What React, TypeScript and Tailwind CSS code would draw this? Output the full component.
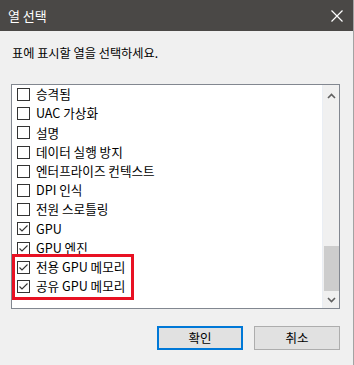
import React from "react"

interface Column {
  label: string
  checked: boolean
}

const columns: Column[] = [
  { label: "승격됨", checked: false },
  { label: "UAC 가상화", checked: false },
  { label: "설명", checked: false },
  { label: "데이터 실행 방지", checked: false },
  { label: "엔터프라이즈 컨텍스트", checked: false },
  { label: "DPI 인식", checked: false },
  { label: "전원 스로틀링", checked: false },
  { label: "GPU", checked: true },
  { label: "GPU 엔진", checked: true },
  { label: "전용 GPU 메모리", checked: true },
  { label: "공유 GPU 메모리", checked: true },
]

function CheckBox({ checked }: { checked: boolean }) {
  return (
    <span className="w-[13px] h-[13px] border border-[#333333] bg-white flex items-center justify-center shrink-0">
      {checked && (
        <svg width="11" height="11" viewBox="0 0 11 11">
          <path d="M1.5 5.5 L4 8 L9.5 2.5" fill="none" stroke="#333333" strokeWidth="1.1" />
        </svg>
      )}
    </span>
  )
}

export default function App() {
  return (
    <div className="w-[354px] h-[365px] bg-[#f0f0f0] border-r border-[#a3a3a3] font-['Noto_Sans_CJK_KR','Noto_Sans',sans-serif] text-[12px] text-black flex flex-col">
      {/* title bar */}
      <div className="h-[31px] bg-[#4a4846] flex items-center justify-between pl-[8px] pr-[10px] shrink-0">
        <span className="text-white text-[13px] leading-none">열 선택</span>
        <svg width="12" height="12" viewBox="0 0 12 12">
          <path d="M0.5 0.5 L11.5 11.5 M11.5 0.5 L0.5 11.5" stroke="#ffffff" strokeWidth="1.2" />
        </svg>
      </div>

      <p className="pl-[12px] pt-[14px] leading-[16px] text-[12.2px]">표에 표시할 열을 선택하세요.</p>

      {/* list box */}
      <div className="ml-[11px] mt-[23px] w-[329px] h-[225px] border border-[#828790] bg-white flex relative">
        <div className="flex-1 flex flex-col">
          {columns.map((col) => (
            <div key={col.label} className="h-[19.2px] flex items-center pl-[5px] gap-[5px]">
              <CheckBox checked={col.checked} />
              <span className="leading-none pl-[1px] text-[12.6px]">{col.label}</span>
            </div>
          ))}
        </div>

        {/* scrollbar */}
        <div className="w-[17px] bg-[#f0f0f0] border-l border-[#eaeef4] flex flex-col items-center">
          <div className="h-[17px] w-full flex items-center justify-center mt-[2px]">
            <svg width="9" height="6" viewBox="0 0 9 6">
              <path d="M1 5 L4.5 1.5 L8 5" fill="none" stroke="#606060" strokeWidth="1.6" />
            </svg>
          </div>
          <div className="flex-1" />
          <div className="w-[15px] h-[45px] bg-[#cdcdcd]" />
          <div className="h-[17px] w-full flex items-center justify-center">
            <svg width="9" height="6" viewBox="0 0 9 6">
              <path d="M1 1 L4.5 4.5 L8 1" fill="none" stroke="#606060" strokeWidth="1.6" />
            </svg>
          </div>
        </div>

        {/* highlight annotation */}
        <div className="absolute left-0 top-[169px] w-[122px] h-[46px] border-[3px] border-[#e81123] pointer-events-none" />
      </div>

      {/* buttons */}
      <div className="flex justify-end gap-[11px] pr-[13px] mt-[17px]">
        <button className="w-[86px] h-[24px] bg-[#e1e1e1] border-2 border-[#0078d7] text-[12.5px] leading-none">
          확인
        </button>
        <button className="w-[86px] h-[24px] bg-[#e1e1e1] border border-[#adadad] text-[12.5px] leading-none">
          취소
        </button>
      </div>
    </div>
  )
}
